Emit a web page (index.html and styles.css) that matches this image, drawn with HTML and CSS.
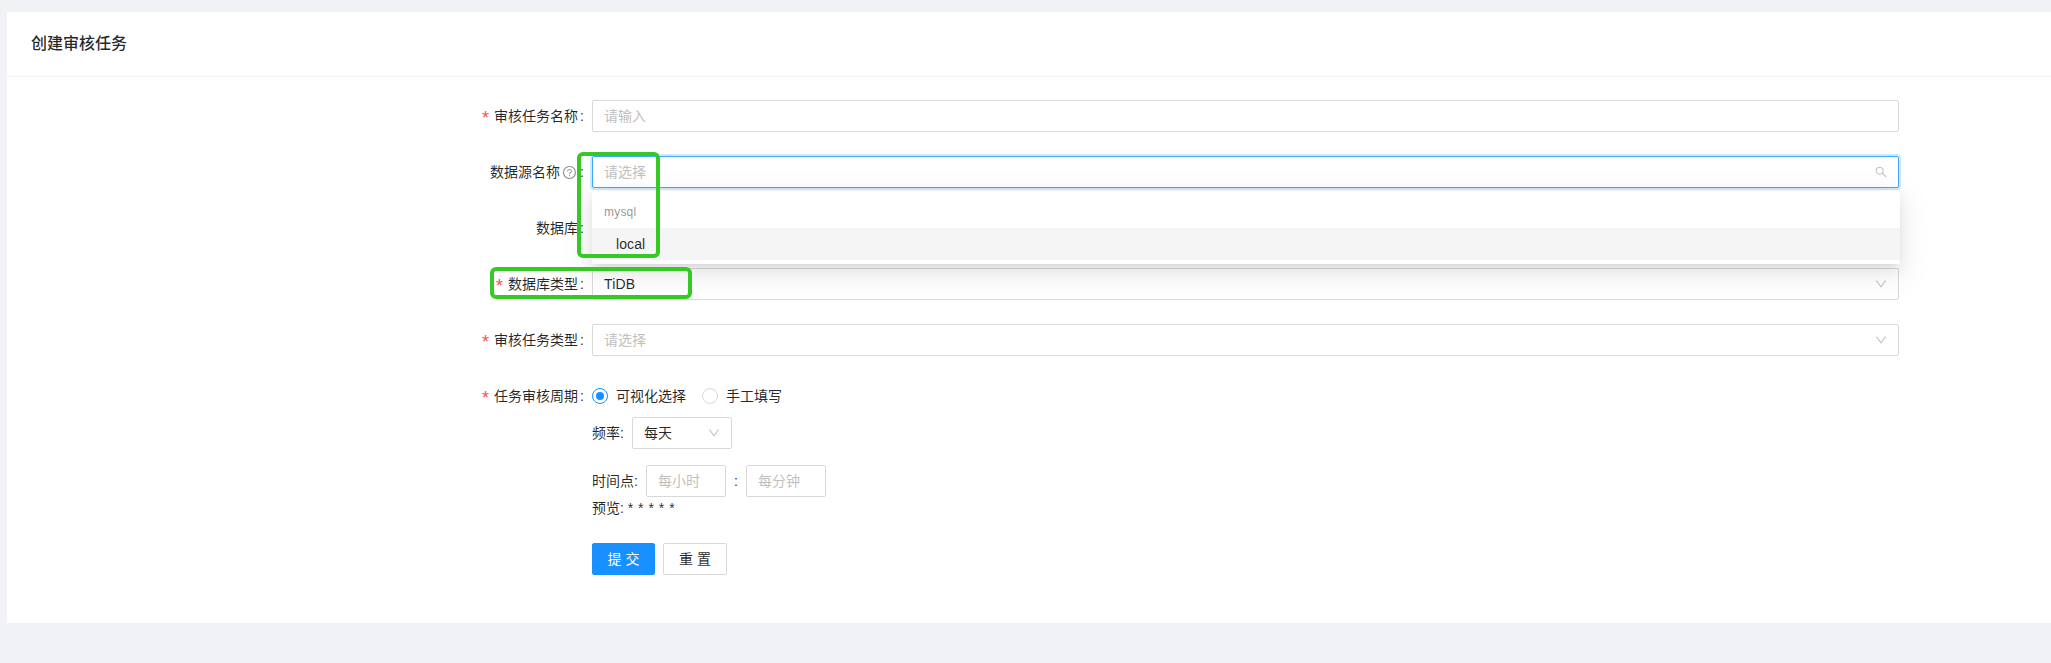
FILE: index.html
```html
<!DOCTYPE html>
<html lang="zh-CN">
<head>
<meta charset="utf-8">
<title>创建审核任务</title>
<link rel="stylesheet" href="styles.css">
</head>
<body>
<main class="card">
  <header class="card-head">创建审核任务</header>
  <form class="form">
    <div class="item">
      <label class="label"><span class="req">*</span>审核任务名称<span class="colon">:</span></label>
      <div class="control"><div class="field"><span class="ph">请输入</span></div></div>
    </div>
    <div class="item">
      <label class="label">数据源名称<svg class="help" viewBox="64 64 896 896"><path d="M512 64C264.600 64 64 264.600 64 512s200.600 448 448 448 448-200.600 448-448S759.400 64 512 64zm0 820c-205.400 0-372-166.600-372-372s166.600-372 372-372 372 166.600 372 372-166.600 372-372 372z"/><path d="M623.600 316.700C593.600 290.400 554 276 512 276s-81.600 14.500-111.600 40.700C369.200 344 352 380.700 352 420v7.600c0 4.400 3.600 8 8 8h48c4.400 0 8-3.600 8-8V420c0-44.100 43.100-80 96-80s96 35.900 96 80c0 31.100-22 59.600-56.100 72.700-21.200 8.100-39.200 22.300-52.100 40.900-13.100 19-19.900 41.800-19.900 64.900V620c0 4.400 3.600 8 8 8h48c4.400 0 8-3.600 8-8v-22.700a48.300 48.300 0 0 1 30.900-44.800c59-22.700 97.100-74.700 97.100-132.500.1-39.300-17.100-76-48.300-103.300z"/><path d="M472 732a40 40 0 1 0 80 0 40 40 0 1 0-80 0z"/></svg><span class="colon">:</span></label>
      <div class="control">
        <div class="field focused"><span class="ph">请选择</span>
          <svg class="ico" viewBox="64 64 896 896"><path d="M909.600 854.500L649.900 594.800C690.200 542.700 712 479 712 412c0-80.200-31.300-155.400-87.900-212.100-56.600-56.700-132-87.900-212.100-87.900s-155.500 31.300-212.100 87.900C143.200 256.500 112 331.800 112 412c0 80.100 31.300 155.500 87.900 212.100C256.500 680.800 331.800 712 412 712c67 0 130.600-21.800 182.700-62l259.700 259.600a8.200 8.200 0 0 0 11.600 0l43.600-43.500a8.200 8.200 0 0 0 0-11.600zM570.400 570.400C528 612.700 471.800 636 412 636s-116-23.300-158.400-65.600C211.300 528 188 471.800 188 412s23.300-116.100 65.600-158.400C296 211.300 352.200 188 412 188s116.100 23.200 158.400 65.600S636 352.200 636 412s-23.300 116.100-65.600 158.400z"/></svg>
        </div>
        <div class="dropdown">
          <div class="group">mysql</div>
          <div class="option">local</div>
        </div>
      </div>
    </div>
    <div class="item">
      <label class="label">数据库<span class="colon">:</span></label>
      <div class="control"><div class="field"></div></div>
    </div>
    <div class="item">
      <label class="label"><span class="req">*</span>数据库类型<span class="colon">:</span></label>
      <div class="control"><div class="field"><span class="val">TiDB</span>
        <svg class="ico" viewBox="64 64 896 896"><path d="M884 256h-75c-5.100 0-9.900 2.500-12.900 6.600L512 654.200 227.900 262.600c-3-4.100-7.800-6.600-12.900-6.600h-75c-6.500 0-10.300 7.400-6.500 12.700l352.600 486.100c12.800 17.600 39 17.600 51.700 0l352.600-486.100c3.900-5.300.1-12.700-6.400-12.700z"/></svg>
      </div></div>
    </div>
    <div class="item">
      <label class="label"><span class="req">*</span>审核任务类型<span class="colon">:</span></label>
      <div class="control"><div class="field"><span class="ph">请选择</span>
        <svg class="ico" viewBox="64 64 896 896"><path d="M884 256h-75c-5.100 0-9.900 2.500-12.900 6.600L512 654.200 227.900 262.600c-3-4.100-7.800-6.600-12.900-6.600h-75c-6.500 0-10.300 7.400-6.500 12.700l352.600 486.100c12.800 17.600 39 17.600 51.700 0l352.600-486.100c3.900-5.300.1-12.700-6.400-12.700z"/></svg>
      </div></div>
    </div>
    <div class="item">
      <label class="label"><span class="req">*</span>任务审核周期<span class="colon">:</span></label>
      <div class="control">
        <div class="radios">
          <span class="radio"><i class="dot on"></i>可视化选择</span>
          <span class="radio"><i class="dot"></i>手工填写</span>
        </div>
        <div class="freq">
          <span>频率:</span>
          <div class="field small"><span class="val">每天</span>
            <svg class="ico" viewBox="64 64 896 896"><path d="M884 256h-75c-5.100 0-9.900 2.500-12.900 6.600L512 654.200 227.900 262.600c-3-4.100-7.800-6.600-12.900-6.600h-75c-6.500 0-10.300 7.400-6.500 12.700l352.600 486.100c12.800 17.600 39 17.600 51.700 0l352.600-486.100c3.900-5.300.1-12.700-6.400-12.700z"/></svg>
          </div>
        </div>
        <div class="time">
          <span>时间点:</span>
          <div class="field tiny"><span class="ph">每小时</span></div>
          <span class="sep">:</span>
          <div class="field tiny"><span class="ph">每分钟</span></div>
        </div>
        <div class="preview">预览: <span class="stars">* * * * *</span></div>
      </div>
    </div>
    <div class="actions">
      <button type="button" class="btn primary">提 交</button>
      <button type="button" class="btn">重 置</button>
    </div>
  </form>
</main>
<div class="mark mark-a"></div>
<div class="mark mark-b"></div>
</body>
</html>
```

FILE: styles.css
```css
* { box-sizing: border-box; }
html, body { margin: 0; height: 663px; overflow: hidden; }
body {
  position: relative;
  padding: 12px 0 0 7px;
  background: #f0f2f5;
  color: rgba(0, 0, 0, .85);
  font: 14px/22px "Liberation Sans", "Noto Sans CJK SC", sans-serif;
}
.card { background: #fff; height: 611px; }
.card-head {
  height: 65px;
  padding-left: 24px;
  display: flex;
  align-items: center;
  font-size: 16px;
  font-weight: 500;
  border-bottom: 1px solid #f0f0f0;
}
.form { padding-top: 23px; }
.item { display: flex; margin-bottom: 24px; }
.label {
  flex: 0 0 585px;
  height: 32px;
  display: flex;
  justify-content: flex-end;
  align-items: center;
}
.req {
  color: #ff4d4f;
  margin-right: 5px;
  font-size: 18px;
  line-height: 1;
  padding-top: 3px;
}
.colon { margin: 0 8px 0 2px; width: 4px; }
.help { width: 13px; height: 13px; margin: 0 2px 0 3px; fill: rgba(0, 0, 0, .45); }
.control { flex: 0 0 1307px; position: relative; }
.field {
  height: 32px;
  border: 1px solid #d9d9d9;
  border-radius: 2px;
  background: #fff;
  padding: 0 11px;
  display: flex;
  align-items: center;
  justify-content: space-between;
}
.field.focused { border-color: #40a9ff; box-shadow: 0 0 0 2px rgba(24, 144, 255, .2); }
.ph { color: #bfbfbf; }
.val { letter-spacing: .2px; }
.ico { width: 12px; height: 12px; fill: #bfbfbf; flex: none; }
.dropdown {
  position: absolute;
  z-index: 2;
  top: 35px;
  left: 0;
  width: 1308px;
  height: 73px;
  padding: 4px 0;
  background: #fff;
  border-radius: 2px;
  box-shadow: 0 3px 6px -4px rgba(0, 0, 0, .12), 0 6px 16px 0 rgba(0, 0, 0, .08), 0 9px 28px 8px rgba(0, 0, 0, .05);
}
.group { height: 33px; padding: 4px 12px; font-size: 12px; letter-spacing: .2px; color: rgba(0, 0, 0, .45); line-height: 27px; }
.option { height: 32px; padding: 5px 12px 5px 24px; line-height: 22px; letter-spacing: .1px; background: #f5f5f5; }
.radios { height: 32px; display: flex; align-items: center; gap: 16px; }
.radio { display: flex; align-items: center; gap: 8px; }
.dot { width: 16px; height: 16px; border: 1px solid #d9d9d9; border-radius: 50%; position: relative; display: block; }
.dot.on { border-color: #1890ff; }
.dot.on::after {
  content: "";
  position: absolute;
  inset: 3px;
  border-radius: 50%;
  background: #1890ff;
}
.freq { margin-top: 5px; display: flex; align-items: center; gap: 8px; }
.field.small { width: 100px; }
.time { margin-top: 16px; display: flex; align-items: center; gap: 8px; }
.field.tiny { width: 80px; }
.sep { width: 4px; text-align: center; }
.preview { height: 22px; }
.stars { letter-spacing: .5px; }
.actions { display: flex; gap: 8px; padding-left: 585px; }
.btn {
  height: 32px;
  width: 64px;
  padding: 0;
  font: inherit;
  color: rgba(0, 0, 0, .85);
  background: #fff;
  border: 1px solid #d9d9d9;
  border-radius: 2px;
}
.btn.primary { width: 63px; color: #fff; background: #1890ff; border-color: #1890ff; }
.mark {
  position: absolute;
  z-index: 3;
  border: 4px solid #36c824;
  border-radius: 6px;
}
.mark-a { left: 577px; top: 152px; width: 83px; height: 106px; }
.mark-b { left: 490px; top: 267px; width: 202px; height: 32px; }
```
